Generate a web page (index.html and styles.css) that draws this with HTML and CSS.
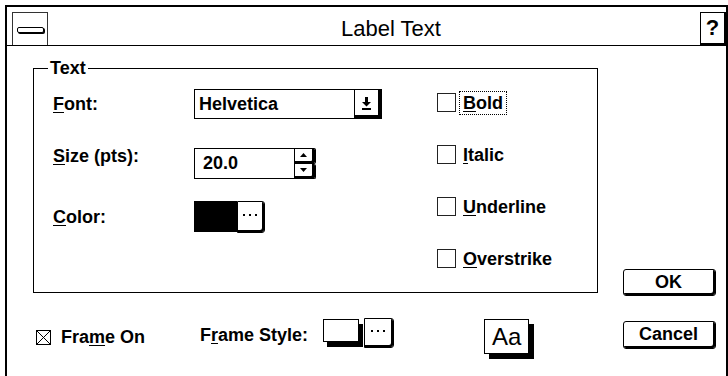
FILE: index.html
```html
<!DOCTYPE html>
<html>
<head>
<meta charset="utf-8">
<link rel="stylesheet" href="styles.css">
</head>
<body>
<div class="window">
  <div class="titlebar">
    <div class="sysbox"><span class="sysbar"></span></div>
    <div class="title">Label Text</div>
    <div class="help">?</div>
  </div>
  <div class="content">
    <div class="left">
      <fieldset class="group">
        <legend>Text</legend>
        <div class="group-inner">
          <div class="fields">
            <div class="lbl lbl-font"><u>F</u>ont:</div>
            <div class="combo">
              <div class="combo-text">Helvetica</div>
              <div class="combo-btn">
                <svg width="9" height="13" viewBox="0 0 9 13"><rect x="3" y="0" width="3" height="5"/><polygon points="0,5 9,5 4.5,9.5"/><rect x="0" y="11" width="9" height="2"/></svg>
              </div>
            </div>
            <div class="lbl lbl-size"><u>S</u>ize (pts):</div>
            <div class="spin">
              <div class="spin-text">20.0</div>
              <div class="spin-btns">
                <div class="spin-half"><svg width="7" height="4" viewBox="0 0 7 4"><polygon points="0,4 7,4 3.5,0"/></svg></div>
                <div class="spin-half"><svg width="7" height="4" viewBox="0 0 7 4"><polygon points="0,0 7,0 3.5,4"/></svg></div>
              </div>
            </div>
            <div class="lbl lbl-color"><u>C</u>olor:</div>
            <div class="color">
              <div class="swatch"></div>
              <div class="dots-btn">
                <svg width="14" height="2" viewBox="0 0 14 2"><rect x="0" y="0" width="2" height="2"/><rect x="6" y="0" width="2" height="2"/><rect x="12" y="0" width="2" height="2"/></svg>
              </div>
            </div>
          </div>
          <div class="checks">
            <div class="check"><span class="cb"></span><span class="cl focus"><u>B</u>old</span></div>
            <div class="check"><span class="cb"></span><span class="cl"><u>I</u>talic</span></div>
            <div class="check"><span class="cb"></span><span class="cl"><u>U</u>nderline</span></div>
            <div class="check"><span class="cb"></span><span class="cl"><u>O</u>verstrike</span></div>
          </div>
        </div>
      </fieldset>
      <div class="bottom">
        <div class="frame-on">
          <span class="xbox"><svg width="13" height="13" viewBox="0 0 13 13"><line x1="0" y1="0" x2="13" y2="13" stroke="#000" stroke-width="1"/><line x1="13" y1="0" x2="0" y2="13" stroke="#000" stroke-width="1"/></svg></span>
          <span class="fo-text">Fra<u>m</u>e On</span>
        </div>
        <div class="frame-style">
          <span class="fs-text">F<u>r</u>ame Style:</span>
          <span class="style-box"></span>
          <span class="dots-btn small">
            <svg width="14" height="2" viewBox="0 0 14 2"><rect x="0" y="0" width="2" height="2"/><rect x="6" y="0" width="2" height="2"/><rect x="12" y="0" width="2" height="2"/></svg>
          </span>
        </div>
        <div class="aa">Aa</div>
      </div>
    </div>
    <div class="buttons">
      <div class="btn btn-ok">OK</div>
      <div class="btn btn-cancel">Cancel</div>
    </div>
  </div>
</div>
</body>
</html>
```

FILE: styles.css
```css
* { box-sizing: border-box; }
html, body { margin: 0; padding: 0; background: #fff; }
body {
  width: 728px;
  height: 376px;
  overflow: hidden;
  font-family: "Liberation Sans", Arial, sans-serif;
  font-weight: bold;
  font-size: 18px;
  color: #000;
}
u { text-decoration-thickness: 1px; text-underline-offset: 2px; }

.window {
  margin: 5px 0 0 5px;
  width: 723px;
  height: 371px;
  border: 2px solid #000;
  border-bottom: 0;
}

.titlebar {
  display: flex;
  align-items: flex-start;
  height: 39px;
  padding: 5px 0 0 5px;
  border-bottom: 1px solid #000;
}
.sysbox {
  width: 36px;
  height: 33px;
  border: 1px solid #333;
  border-bottom: 0;
  display: flex;
  align-items: center;
  justify-content: center;
  padding-top: 2px;
}
.sysbar {
  width: 27px;
  height: 6px;
  border: 1px solid #000;
  border-radius: 2px;
  box-shadow: 1px 1px 0 #000;
  background: #fff;
}
.title {
  flex: 1;
  text-align: center;
  font-weight: normal;
  font-size: 22px;
  line-height: 33px;
  padding-left: 34px;
}
.help {
  width: 26px;
  height: 33px;
  border: 1px solid #000;
  border-right-width: 2px;
  border-bottom-width: 2px;
  font-size: 22px;
  line-height: 30px;
  text-align: center;
}

.content { display: flex; }
.left { width: 591px; padding-left: 26px; }

.group {
  margin: 12px 0 0 0;
  padding: 0;
  width: 565px;
  min-width: 0;
  border: 1px solid #000;
}
.group legend {
  margin-left: 14px;
  padding: 0 2px;
  line-height: 20px;
  font-size: 18px;
}
.group-inner {
  display: flex;
  height: 214px;
  padding-left: 19px;
}

.fields {
  display: grid;
  grid-template-columns: 141px 243px;
  grid-template-rows: 59px 53px 33px;
  align-items: start;
  padding-top: 11px;
}
.lbl { line-height: 20px; }
.lbl-font { margin-top: 5px; }
.lbl-size { margin-top: -2px; }
.lbl-color { margin-top: 6px; }

.combo { display: flex; height: 30px; }
.combo-text {
  width: 161px;
  height: 30px;
  border: 1px solid #000;
  padding-left: 4px;
  line-height: 28px;
}
.combo-btn {
  width: 27px;
  height: 30px;
  border: 1px solid #000;
  border-left: 0;
  box-shadow: inset -3px -3px 0 #000;
  display: flex;
  align-items: center;
  justify-content: center;
  padding: 0 3px 2px 0;
}

.spin { display: flex; height: 31px; }
.spin-text {
  width: 101px;
  height: 31px;
  border: 1px solid #000;
  padding-left: 8px;
  line-height: 29px;
}
.spin-btns {
  width: 21px;
  height: 31px;
  display: flex;
  flex-direction: column;
}
.spin-half {
  flex: 1;
  border: 1px solid #000;
  border-left: 0;
  border-radius: 0 2px 2px 0;
  box-shadow: inset -3px -2px 0 #000;
  display: flex;
  align-items: center;
  justify-content: center;
  padding: 0 3px 2px 0;
}
.spin-half + .spin-half { border-top: 0; }

.color { display: flex; height: 32px; }
.swatch { width: 43px; height: 31px; background: #000; }
.dots-btn {
  display: flex;
  align-items: center;
  justify-content: center;
  width: 28px;
  height: 32px;
  border: 1px solid #000;
  border-radius: 0 3px 3px 0;
  box-shadow: inset -2px -2px 0 #000;
  padding: 0 2px 4px 0;
}

.checks {
  display: flex;
  flex-direction: column;
  gap: 33px;
  padding-top: 15px;
}
.check { display: flex; align-items: center; height: 19px; }
.cb {
  width: 19px;
  height: 19px;
  border: 1px solid #222;
}
.cl {
  margin-left: 3px;
  padding: 1px 3px 1px 3px;
  line-height: 20px;
  border: 1px dotted transparent;
}
.cl.focus { border-color: #000; }

.bottom {
  display: flex;
  align-items: flex-start;
  margin: 25px 0 0 3px;
  height: 40px;
}
.frame-on {
  display: flex;
  align-items: center;
  width: 164px;
  margin-top: 9px;
}
.xbox {
  width: 15px;
  height: 15px;
  border: 1px solid #000;
  display: flex;
}
.fo-text { margin-left: 10px; line-height: 20px; }
.frame-style { display: flex; align-items: flex-start; }
.fs-text { line-height: 20px; margin-top: 7px; }
.style-box {
  width: 36px;
  height: 23px;
  margin: 1px 0 0 15px;
  border: 1px solid #000;
  box-shadow: 4px 5px 0 #000;
}
.dots-btn.small {
  width: 30px;
  height: 30px;
  margin-left: 5px;
  border-radius: 0 3px 3px 0;
}
.aa {
  width: 45px;
  height: 35px;
  margin: 1px 0 0 90px;
  border: 1px solid #000;
  box-shadow: 5px 5px 0 #000;
  font-weight: normal;
  font-size: 24px;
  line-height: 33px;
  text-align: center;
}

.buttons {
  display: flex;
  flex-direction: column;
  gap: 25px;
  margin-left: 25px;
  padding-top: 223px;
}
.btn {
  width: 93px;
  border: 1px solid #000;
  border-radius: 3px;
  box-shadow: inset -2px -2px 0 #000;
  text-align: center;
  padding-right: 2px;
}
.btn-ok { height: 27px; line-height: 24px; }
.btn-cancel { height: 28px; line-height: 25px; }
```
